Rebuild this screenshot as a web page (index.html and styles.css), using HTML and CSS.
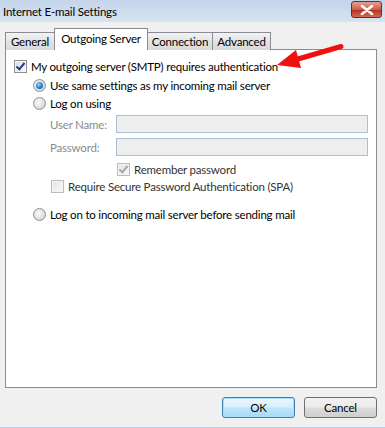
FILE: index.html
```html
<!DOCTYPE html>
<html lang="en">
<head>
    <meta charset="UTF-8">
    <title>Internet E-mail Settings</title>
    <link rel="stylesheet" href="styles.css">
</head>
<body>
    <div class="window">
        <div class="titlebar">
            <span class="title">Internet E-mail Settings</span>
            <span class="close">
                <svg width="14" height="10" viewBox="0 0 14 10"><path d="M2 1 L12 9 M12 1 L2 9" stroke="#fff" stroke-width="2.6" stroke-linecap="round"/></svg>
            </span>
        </div>

        <div class="content">
            <div class="tabs">
                <div class="tab t-general">General</div>
                <div class="tab t-outgoing active">Outgoing Server</div>
                <div class="tab t-connection">Connection</div>
                <div class="tab t-advanced">Advanced</div>
            </div>

            <div class="panel">
                <label class="row r-auth">
                    <span class="check on"></span>
                    My outgoing server (SMTP) requires authentication
                </label>
                <label class="row r-same">
                    <span class="radio on"></span>
                    Use same settings as my incoming mail server
                </label>
                <label class="row r-logon">
                    <span class="radio"></span>
                    Log on using
                </label>
                <div class="field f-user">
                    <span class="field-label">User Name:</span>
                    <span class="textbox"></span>
                </div>
                <div class="field f-pass">
                    <span class="field-label">Password:</span>
                    <span class="textbox"></span>
                </div>
                <label class="row small r-remember">
                    <span class="check on disabled"></span>
                    Remember password
                </label>
                <label class="row small r-spa">
                    <span class="check disabled"></span>
                    Require Secure Password Authentication (SPA)
                </label>
                <label class="row r-before">
                    <span class="radio"></span>
                    Log on to incoming mail server before sending mail
                </label>
            </div>

            <div class="buttons">
                <button class="btn default">OK</button>
                <button class="btn">Cancel</button>
            </div>
        </div>

        <!-- red pointer drawn over the dialog -->
        <svg class="arrow" width="80" height="35" viewBox="0 0 80 35">
            <path d="M71 6.5 L28 19" stroke="#f01010" stroke-width="5" stroke-linecap="round"/>
            <polygon points="7,25 26,10 31,28" fill="#f01010"/>
        </svg>
    </div>
</body>
</html>
```

FILE: styles.css
```css
body {
    margin: 0;
    font-family: Lato, "Open Sans", sans-serif;
    font-size: 11.5px;
    letter-spacing: -0.2px;
    color: #000;
    background-color: #f0f0f0;
}
.window {
    position: relative;
    width: 385px;
    height: 428px;
    box-sizing: border-box;
    border-bottom: 1px solid #b9cde4;
    background-color: #f0f0f0;
}
.titlebar {
    height: 22px;
    display: flex;
    align-items: center;
    justify-content: space-between;
    padding: 0 3px;
    background: linear-gradient(#c4d5e9, #d7e3f1);
}
.title {
    font-size: 11.5px;
}
.close {
    width: 29px;
    height: 15px;
    margin-top: -3px;
    display: flex;
    align-items: center;
    justify-content: center;
    border: 1px solid #6f2a24;
    border-radius: 3px;
    background: linear-gradient(#e1a293, #cd5d4a 50%, #b8321e 55%, #cf6a52);
}
.content {
    padding: 7px 8px 0 5px;
}
.tabs {
    display: flex;
    align-items: flex-end;
    height: 21px;
    margin-bottom: -1px;
    position: relative;
}
.tab {
    height: 18px;
    line-height: 17px;
    text-align: center;
    box-sizing: border-box;
    border: 1px solid #898c95;
    border-bottom: none;
    margin-right: -1px;
    background: linear-gradient(#f3f3f3, #e3e3e3 50%, #d9d9d9);
}
.t-general { width: 50px; }
.t-outgoing { width: 94px; }
.t-connection { width: 66px; }
.t-advanced { width: 59px; }
.tab.active {
    height: 22px;
    line-height: 20px;
    background: #fff;
    position: relative;
    z-index: 1;
}
.panel {
    height: 339px;
    box-sizing: border-box;
    border: 1px solid #898c95;
    background-color: #fff;
    padding: 7px 0 0 8px;
}
.row {
    display: flex;
    align-items: center;
    height: 18px;
}
.row.small {
    height: 17px;
}
.r-same { margin: 1px 0 0 19px; }
.r-logon { margin-left: 19px; }
.r-remember { margin: 5px 0 0 103px; color: #333; }
.r-spa { margin-left: 37px; color: #333; }
.r-before { margin: 10px 0 0 19px; }

.check, .radio {
    width: 13px;
    height: 13px;
    box-sizing: border-box;
    margin-right: 4px;
    flex-shrink: 0;
}
.check {
    border: 1px solid #8e8f8f;
    background: linear-gradient(135deg, #dcdcdc, #fbfbfb);
    box-shadow: inset 0 0 0 1px #f4f4f4;
    position: relative;
}
.check.on::after {
    content: "";
    position: absolute;
    left: 3px;
    top: 0;
    width: 3px;
    height: 7px;
    border: solid #1d3f8f;
    border-width: 0 2px 2px 0;
    transform: rotate(40deg);
}
.check.disabled {
    border-color: #bcbcbc;
    background: linear-gradient(135deg, #e6e6e6, #f7f7f7);
}
.check.disabled.on::after {
    border-color: #a8a8a8;
}
.radio {
    border-radius: 50%;
    border: 1px solid #8e8f8f;
    background: radial-gradient(circle at 40% 40%, #fafafa, #d7d7d7 75%);
    position: relative;
}
.radio.on::after {
    content: "";
    position: absolute;
    left: 2px;
    top: 2px;
    width: 7px;
    height: 7px;
    border-radius: 50%;
    background: radial-gradient(circle at 40% 35%, #8fd3ff, #1a78c8 60%, #0e4f8c);
}
.field {
    display: flex;
    align-items: center;
    height: 18px;
    margin-left: 36px;
}
.f-user { margin-top: 3px; }
.f-pass { margin-top: 5px; }
.field-label {
    width: 66px;
    color: #8a8a8a;
}
.textbox {
    width: 252px;
    height: 18px;
    box-sizing: border-box;
    border: 1px solid #abbfd6;
    background-color: #eeeeee;
}
.buttons {
    display: flex;
    justify-content: flex-end;
    gap: 9px;
    margin-top: 9px;
}
.btn {
    width: 73px;
    height: 21px;
    font-family: inherit;
    font-size: 11.5px;
    letter-spacing: -0.2px;
    color: #000;
    border: 1px solid #707070;
    border-radius: 3px;
    background: linear-gradient(#f2f2f2, #ebebeb 48%, #dddddd 52%, #cfcfcf);
    padding: 0;
}
.btn.default {
    border-color: #3c7fb1;
    background: linear-gradient(#eaf6fd, #d9f0fc 48%, #bee6fd 52%, #a7d9f5);
    box-shadow: inset 0 0 0 1px #9fe3fb;
}
.arrow {
    position: absolute;
    left: 270px;
    top: 40px;
}
```
